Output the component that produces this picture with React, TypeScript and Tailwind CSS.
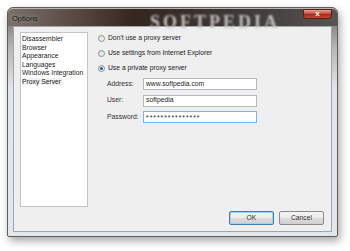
import React from 'react'

const FONT = { fontFamily: '"Liberation Sans", Arial, sans-serif' }

const PAGES = ['Disassembler', 'Browser', 'Appearance', 'Languages', 'Windows Integration', 'Proxy Server']

function Radio({ checked, label }: { checked?: boolean; label: string }) {
  return (
    <div className="flex h-[12px] items-center">
      <span className="flex h-[7px] w-[7px] items-center justify-center rounded-full border border-[#8d8f91] bg-[linear-gradient(135deg,#d9dadb,#f7f7f7)]">
        {checked && <span className="h-[3px] w-[3px] rounded-full bg-[#2a5f91]" />}
      </span>
      <span className="ml-[3px] text-[6.75px] text-[#222]">{label}</span>
    </div>
  )
}

function Field({ label, value, focused, stars }: { label: string; value: string; focused?: boolean; stars?: boolean }) {
  return (
    <div className="flex h-[12px] items-center">
      <span className="w-[36px] text-[6.75px] text-[#333]">{label}</span>
      <div
        className={
          'flex h-[12px] w-[114px] items-center bg-white pl-[2px] text-[6.75px] text-[#222] ' +
          (focused ? 'border border-[#7eb4ea]' : 'border border-[#b5b8bd]')
        }
      >
        {stars ? <span className="mt-[2px] tracking-[1px]">{value}</span> : value}
      </div>
    </div>
  )
}

function Btn({ label, primary }: { label: string; primary?: boolean }) {
  return (
    <div
      className={
        'flex h-[14px] w-[45px] items-center justify-center rounded-[2px] bg-[linear-gradient(to_bottom,#f4f4f4_0%,#ebebeb_50%,#dddddd_51%,#cfcfcf_100%)] text-[6.75px] text-[#333] ' +
        (primary ? 'border border-[#3c7fb1] shadow-[inset_0_0_0_1px_#9fd3f3]' : 'border border-[#8a8a8a]')
      }
    >
      {label}
    </div>
  )
}

export default function App() {
  return (
    <div className="h-[251px] w-[350px] overflow-hidden bg-white pl-[7px] pt-[7px]" style={FONT}>
      <div className="flex h-[230px] w-[331px] flex-col rounded-t-[6px] rounded-b-[2px] border border-[#5f5b58] bg-[linear-gradient(to_bottom,#6c635d_0px,#b8b6b5_40px,#e1e4e8_80px,#e4e7ea_100%)] shadow-[2px_4px_8px_rgba(0,0,0,0.35)]">
        <div className="relative flex h-[20px] items-start rounded-t-[5px] border-t border-[#b9b5b2] bg-[linear-gradient(to_right,#7a716b_0%,#55463f_22%,#35261f_38%,#3d3836_70%,#575453_100%)]">
          <span className="ml-[4px] mt-[3.5px] text-[7.5px] text-[#151515] [text-shadow:0_0_4px_rgba(255,255,255,0.55)]">Options</span>
          <span
            className="absolute left-[142px] top-[0px] text-[18px] font-bold tracking-[3px] text-[#c4c4c4] blur-[0.9px]"
            style={{ fontFamily: '"Liberation Serif", serif' }}
          >
            SOFTPEDIA
          </span>
          <div className="relative ml-auto mr-[5px] flex h-[10px] w-[29px] items-center justify-center rounded-b-[3px] border border-[#5a1f18] bg-[linear-gradient(to_bottom,#e2a295_0%,#c8503f_45%,#a82a1b_55%,#c24a33_100%)]">
            <span className="text-[8px] font-bold leading-none text-white">x</span>
          </div>
        </div>
        <div className="mx-[5px] mb-[4px] flex flex-1 flex-col border border-[#a0a5ab] bg-[#efefef] px-[6px] pb-[6px] pt-[5px]">
          <div className="flex h-[175px]">
            <div className="h-[175px] w-[68px] border border-[#c2c4c7] bg-white pl-[1px] pt-[2px]">
              {PAGES.map((p) => (
                <div key={p} className="text-[6.75px] leading-[8.6px] text-[#222]">
                  <span className={p === 'Proxy Server' ? 'bg-[#f1f1f1] pr-[2px]' : ''}>{p}</span>
                </div>
              ))}
            </div>
            <div className="ml-[10px] flex flex-col">
              <div className="flex flex-col gap-[3px]">
                <Radio label="Don't use a proxy server" />
                <Radio label="Use settings from Internet Explorer" />
                <Radio checked label="Use a private proxy server" />
              </div>
              <div className="ml-[9px] mt-[4px] flex flex-col gap-[4.5px]">
                <Field label="Address:" value="www.softpedia.com" />
                <Field label="User:" value="softpedia" />
                <Field label="Password:" value="***************" focused stars />
              </div>
            </div>
          </div>
          <div className="mt-[4px] flex justify-end gap-[5px] pr-[1px]">
            <Btn label="OK" primary />
            <Btn label="Cancel" />
          </div>
        </div>
      </div>
    </div>
  )
}
